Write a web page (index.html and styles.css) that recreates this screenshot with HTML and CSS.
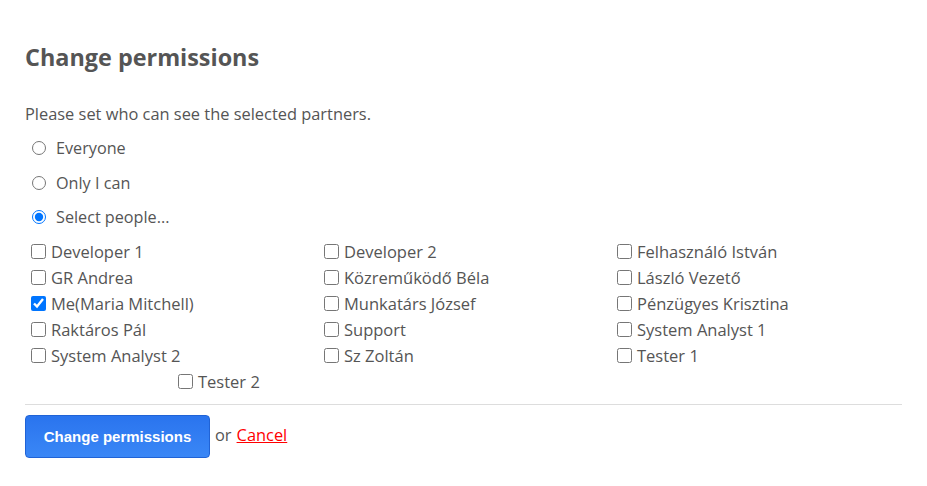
FILE: index.html
```html
<!DOCTYPE html>
<html>
<head>
<meta charset="utf-8">
<link rel="stylesheet" href="styles.css">
</head>
<body>
<div class="page">
  <h1 class="title">Change permissions</h1>
  <p class="intro">Please set who can see the selected partners.</p>
  <div class="radios">
    <label class="radio"><input type="radio" name="who"> Everyone</label>
    <label class="radio"><input type="radio" name="who"> Only I can</label>
    <label class="radio"><input type="radio" name="who" checked> Select people...</label>
  </div>
  <div class="people">
    <label class="person"><input type="checkbox">Developer 1</label>
    <label class="person"><input type="checkbox">Developer 2</label>
    <label class="person"><input type="checkbox">Felhasználó István</label>
    <label class="person"><input type="checkbox">GR Andrea</label>
    <label class="person"><input type="checkbox">Közreműködő Béla</label>
    <label class="person"><input type="checkbox">László Vezető</label>
    <label class="person"><input type="checkbox" checked>Me(Maria Mitchell)</label>
    <label class="person"><input type="checkbox">Munkatárs József</label>
    <label class="person"><input type="checkbox">Pénzügyes Krisztina</label>
    <label class="person"><input type="checkbox">Raktáros Pál</label>
    <label class="person"><input type="checkbox">Support</label>
    <label class="person"><input type="checkbox">System Analyst 1</label>
    <label class="person"><input type="checkbox">System Analyst 2</label>
    <label class="person"><input type="checkbox">Sz Zoltán</label>
    <label class="person"><input type="checkbox">Tester 1</label>
    <label class="person last"><input type="checkbox">Tester 2</label>
  </div>
  <div class="actions">
    <button class="btn" type="button">Change permissions</button>
    <span class="or">or</span>
    <a class="cancel" href="#">Cancel</a>
  </div>
</div>
</body>
</html>
```

FILE: styles.css
```css
html, body {
  margin: 0;
  padding: 0;
  background: #fff;
}
.page {
  padding: 0 25px;
  font-family: "Open Sans", "Noto Sans", sans-serif;
  color: #555;
  font-size: 16px;
}
.title {
  margin: 0;
  padding-top: 40px;
  font-size: 23.4px;
  line-height: 34px;
  font-weight: 700;
  color: #555;
}
.intro {
  margin: 0;
  padding-top: 28px;
  line-height: 24px;
  font-size: 16.4px;
}
.radios {
  display: flex;
  flex-direction: column;
  padding-top: 5px;
}
.radio {
  display: flex;
  align-items: center;
  height: 34.5px;
  font-size: 16.2px;
}
.radio input {
  margin: 0 10px 0 7px;
  width: 14px;
  height: 14px;
}
.people {
  display: grid;
  grid-template-columns: repeat(3, 293px);
  grid-auto-rows: 26px;
  padding-left: 2px;
  margin-top: 4px;
}
.person {
  display: flex;
  align-items: center;
  font-size: 16.5px;
  white-space: nowrap;
}
.person input {
  margin: 0 5px 0 4px;
  width: 15px;
  height: 15px;
}
.person.last {
  grid-column: 1;
  padding-left: 147px;
}
.actions {
  border-top: 1px solid #dddddd;
  margin-top: 9px;
  padding-top: 10px;
  display: flex;
  align-items: center;
}
.btn {
  height: 43px;
  width: 185px;
  border: 1px solid #2063d6;
  border-radius: 4px;
  background: linear-gradient(#2a74ee, #3a87f6);
  color: #fff;
  font-family: "Liberation Sans", Arial, sans-serif;
  font-weight: 700;
  font-size: 15px;
  padding: 0;
}
.or {
  margin-left: 5px;
  font-size: 16.4px;
  color: #555;
  position: relative;
  top: -2px;
}
.cancel {
  margin-left: 5px;
  color: #ff0000;
  font-size: 16.4px;
  position: relative;
  top: -2px;
}
```
